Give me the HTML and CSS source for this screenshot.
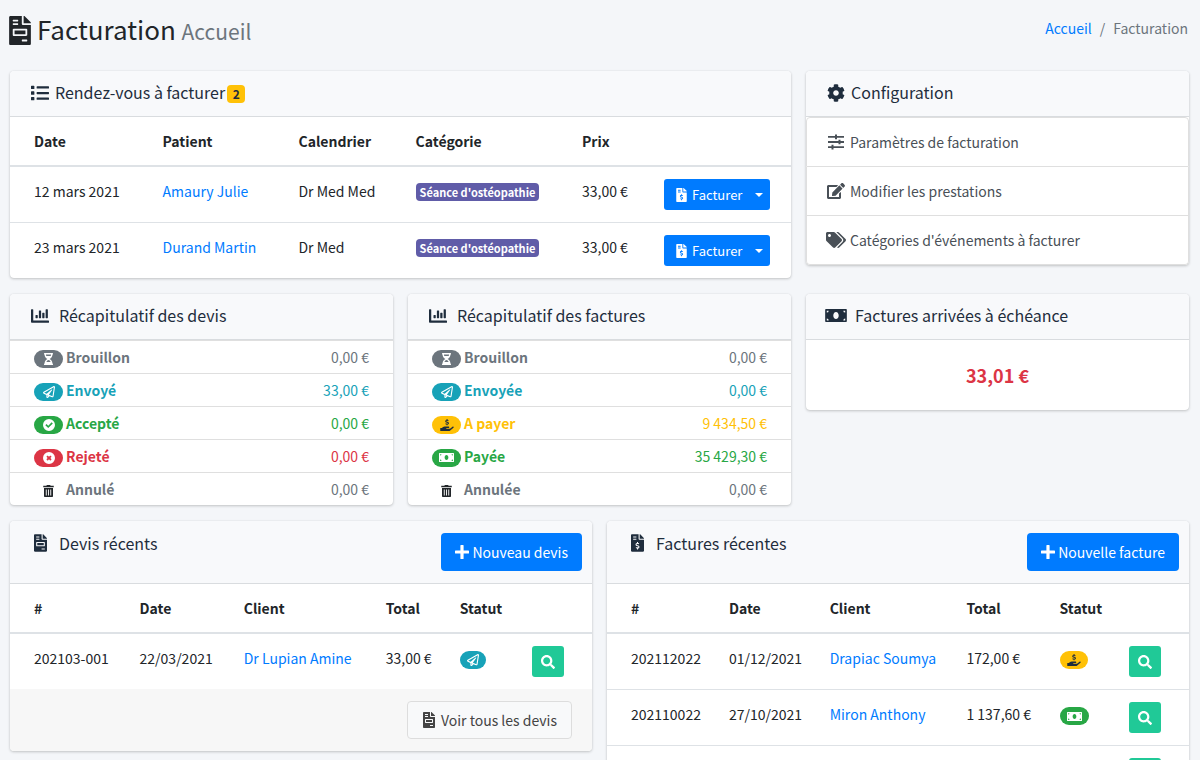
FILE: index.html
```html
<!DOCTYPE html>
<html lang="fr">
<head>
<meta charset="utf-8">
<meta name="viewport" content="width=device-width, initial-scale=1">
<title>Facturation</title>
<link rel="stylesheet" href="styles.css">
</head>
<body>
<svg class="sprite" aria-hidden="true">
  <symbol id="invoice" viewBox="0 0 384 512"><path d="M288 256H96v64h192v-64zm89-151L279.1 7c-4.5-4.5-10.6-7-17-7H256v128h128v-6.1c0-6.3-2.5-12.4-7-16.9zm-153 31V0H24C10.7 0 0 10.7 0 24v464c0 13.3 10.7 24 24 24h336c13.3 0 24-10.7 24-24V160H248c-13.2 0-24-10.8-24-24zM64 72c0-4.42 3.58-8 8-8h80c4.42 0 8 3.58 8 8v16c0 4.42-3.58 8-8 8H72c-4.42 0-8-3.58-8-8V72zm0 64c0-4.42 3.58-8 8-8h80c4.42 0 8 3.58 8 8v16c0 4.42-3.58 8-8 8H72c-4.42 0-8-3.58-8-8v-16zm256 304c0 4.42-3.58 8-8 8h-80c-4.42 0-8-3.58-8-8v-16c0-4.42 3.58-8 8-8h80c4.42 0 8 3.58 8 8v16zm0-200v96c0 8.84-7.16 16-16 16H80c-8.84 0-16-7.16-16-16v-96c0-8.84 7.16-16 16-16h224c8.84 0 16 7.16 16 16z"/></symbol>
  <symbol id="invoice-dollar" viewBox="0 0 384 512"><path d="M377 105L279.1 7c-4.5-4.5-10.6-7-17-7H256v128h128v-6.1c0-6.3-2.5-12.4-7-16.9zm-153 31V0H24C10.7 0 0 10.7 0 24v464c0 13.3 10.7 24 24 24h336c13.3 0 24-10.7 24-24V160H248c-13.2 0-24-10.8-24-24zM64 72c0-4.42 3.58-8 8-8h80c4.42 0 8 3.58 8 8v16c0 4.42-3.58 8-8 8H72c-4.42 0-8-3.58-8-8V72zm0 80v-16c0-4.42 3.58-8 8-8h80c4.42 0 8 3.58 8 8v16c0 4.42-3.58 8-8 8H72c-4.42 0-8-3.58-8-8zm144 263.88V440c0 4.42-3.58 8-8 8h-16c-4.42 0-8-3.58-8-8v-24.29c-11.29-.58-22.27-4.52-31.37-11.35-3.9-2.93-4.1-8.77-.57-12.14l11.75-11.21c2.77-2.64 6.89-2.76 10.13-.73 3.87 2.42 8.26 3.72 12.82 3.72h28.11c6.5 0 11.8-5.92 11.8-13.19 0-5.95-3.61-11.19-8.77-12.73l-45-13.5c-18.59-5.58-31.58-23.42-31.58-43.39 0-24.52 19.05-44.44 42.67-45.07V232c0-4.42 3.58-8 8-8h16c4.42 0 8 3.58 8 8v24.29c11.29.58 22.27 4.51 31.37 11.35 3.9 2.93 4.1 8.77.57 12.14l-11.75 11.21c-2.77 2.64-6.89 2.76-10.13.73-3.87-2.43-8.26-3.72-12.82-3.72h-28.11c-6.5 0-11.8 5.92-11.8 13.19 0 5.95 3.61 11.19 8.77 12.73l45 13.5c18.59 5.58 31.58 23.42 31.58 43.39 0 24.53-19.05 44.44-42.67 45.07z"/></symbol>
  <symbol id="list" viewBox="0 0 512 512"><path d="M80 368H16a16 16 0 0 0-16 16v64a16 16 0 0 0 16 16h64a16 16 0 0 0 16-16v-64a16 16 0 0 0-16-16zm0-320H16A16 16 0 0 0 0 64v64a16 16 0 0 0 16 16h64a16 16 0 0 0 16-16V64a16 16 0 0 0-16-16zm0 160H16a16 16 0 0 0-16 16v64a16 16 0 0 0 16 16h64a16 16 0 0 0 16-16v-64a16 16 0 0 0-16-16zm416 176H176a16 16 0 0 0-16 16v32a16 16 0 0 0 16 16h320a16 16 0 0 0 16-16v-32a16 16 0 0 0-16-16zm0-320H176a16 16 0 0 0-16 16v32a16 16 0 0 0 16 16h320a16 16 0 0 0 16-16V80a16 16 0 0 0-16-16zm0 160H176a16 16 0 0 0-16 16v32a16 16 0 0 0 16 16h320a16 16 0 0 0 16-16v-32a16 16 0 0 0-16-16z"/></symbol>
  <symbol id="cog" viewBox="0 0 512 512"><path d="M487.4 315.7l-42.6-24.6c4.3-23.2 4.3-47 0-70.2l42.6-24.6c4.9-2.8 7.1-8.6 5.5-14-11.1-35.6-30-67.8-54.7-94.6-3.8-4.1-10-5.1-14.8-2.3L380.8 110c-17.9-15.4-38.5-27.3-60.8-35.1V25.8c0-5.6-3.9-10.5-9.4-11.7-36.7-8.2-74.3-7.8-109.2 0-5.5 1.2-9.4 6.1-9.4 11.7V75c-22.2 7.9-42.8 19.8-60.8 35.1L88.7 85.5c-4.9-2.8-11-1.9-14.8 2.3-24.7 26.7-43.6 58.9-54.7 94.6-1.7 5.4.6 11.2 5.5 14L67.3 221c-4.3 23.2-4.3 47 0 70.2l-42.6 24.6c-4.9 2.8-7.1 8.6-5.5 14 11.1 35.6 30 67.8 54.7 94.6 3.8 4.1 10 5.1 14.8 2.3l42.6-24.6c17.9 15.4 38.5 27.3 60.8 35.1v49.2c0 5.6 3.9 10.5 9.4 11.7 36.7 8.2 74.3 7.8 109.2 0 5.5-1.2 9.4-6.1 9.4-11.7v-49.2c22.2-7.9 42.8-19.8 60.8-35.1l42.6 24.6c4.9 2.8 11 1.9 14.8-2.3 24.7-26.7 43.6-58.9 54.7-94.6 1.5-5.5-.7-11.3-5.6-14.1zM256 336c-44.1 0-80-35.9-80-80s35.9-80 80-80 80 35.9 80 80-35.9 80-80 80z"/></symbol>
  <symbol id="sliders" viewBox="0 0 16 16"><path d="M0 2h7V.6h2V2h7v1.800H9v1.400H7V3.800H0zM0 7.100h10.500V5.700h2v1.400H16v1.800h-3.500v1.400h-2V8.900H0zM0 12.200h3.500v-1.400h2v1.400H16V14H5.500v1.400h-2V14H0z"/></symbol>
  <symbol id="edit" viewBox="0 0 576 512"><path d="M402.6 83.2l90.2 90.2c3.8 3.8 3.8 10 0 13.8L274.4 405.6l-92.8 10.3c-12.4 1.4-22.9-9.1-21.5-21.5l10.3-92.8L388.8 83.2c3.8-3.8 10-3.8 13.8 0zm162-22.9l-48.800-48.800c-15.200-15.200-39.900-15.200-55.200 0l-35.400 35.400c-3.800 3.800-3.800 10 0 13.800l90.200 90.200c3.800 3.800 10 3.800 13.800 0l35.400-35.400c15.200-15.300 15.200-40 0-55.200zM384 346.200V448H64V128h229.800c3.200 0 6.200-1.300 8.500-3.500l40-40c7.600-7.600 2.200-20.500-8.500-20.500H48C21.500 64 0 85.500 0 112v352c0 26.500 21.500 48 48 48h352c26.500 0 48-21.500 48-48V306.200c0-10.700-12.900-16-20.500-8.500l-40 40c-2.200 2.300-3.500 5.300-3.500 8.500z"/></symbol>
  <symbol id="tags" viewBox="0 0 640 512"><path d="M497.941 225.941L286.059 14.059A48 48 0 0 0 252.118 0H48C21.490 0 0 21.490 0 48v204.118a48 48 0 0 0 14.059 33.941l211.882 211.882c18.744 18.745 49.136 18.746 67.882 0l204.118-204.118c18.745-18.745 18.745-49.137 0-67.882zM112 160c-26.510 0-48-21.490-48-48s21.490-48 48-48 48 21.490 48 48-21.490 48-48 48zm513.941 133.823L421.823 497.941c-18.745 18.745-49.137 18.745-67.882 0l-.36-.36L527.640 323.522c16.999-16.999 26.362-39.600 26.362-63.640s-9.362-46.641-26.362-63.640L331.397 0h48.721a48 48 0 0 1 33.941 14.059l211.882 211.882c18.745 18.745 18.745 49.137 0 67.882z"/></symbol>
  <symbol id="chart" viewBox="0 0 512 512"><path d="M332.8 320h38.4c6.400 0 12.800-6.400 12.800-12.800V172.800c0-6.400-6.400-12.800-12.800-12.800h-38.400c-6.400 0-12.800 6.400-12.800 12.800v134.400c0 6.400 6.400 12.800 12.800 12.800zm96 0h38.400c6.400 0 12.800-6.400 12.800-12.800V76.800c0-6.400-6.400-12.800-12.800-12.800h-38.400c-6.400 0-12.800 6.400-12.800 12.800v230.400c0 6.400 6.400 12.800 12.800 12.800zm-288 0h38.400c6.400 0 12.800-6.400 12.800-12.800v-70.400c0-6.400-6.400-12.800-12.800-12.800h-38.400c-6.400 0-12.800 6.400-12.800 12.800v70.400c0 6.400 6.400 12.800 12.800 12.800zm96 0h38.400c6.400 0 12.800-6.400 12.800-12.800V108.800c0-6.400-6.400-12.800-12.800-12.800h-38.400c-6.400 0-12.800 6.400-12.800 12.800v198.400c0 6.400 6.400 12.800 12.800 12.800zM496 384H64V80c0-8.840-7.160-16-16-16H16C7.160 64 0 71.160 0 80v336c0 17.670 14.330 32 32 32h464c8.840 0 16-7.160 16-16v-32c0-8.840-7.160-16-16-16z"/></symbol>
  <symbol id="money" viewBox="0 0 640 384"><path fill-rule="evenodd" d="M24 0h592a24 24 0 0 1 24 24v336a24 24 0 0 1-24 24H24a24 24 0 0 1-24-24V24A24 24 0 0 1 24 0zM48 48v56a56 56 0 0 0 56-56zM592 48h-56a56 56 0 0 0 56 56zM48 336h56a56 56 0 0 0-56-56zM592 336v-56a56 56 0 0 0-56 56zM320 88c-46 0-80 46-80 104s34 104 80 104 80-46 80-104-34-104-80-104z"/></symbol>
  <symbol id="hourglass" viewBox="0 0 384 512"><path fill-rule="evenodd" d="M24 0h336a24 24 0 0 1 24 24v16a24 24 0 0 1-24 24c0 91-51 168-121 192 70 24 121 101 121 192a24 24 0 0 1 24 24v16a24 24 0 0 1-24 24H24a24 24 0 0 1-24-24v-16a24 24 0 0 1 24-24c0-91 51-168 121-192C75 232 24 155 24 64A24 24 0 0 1 0 40V24A24 24 0 0 1 24 0zM84 64c2 20 6 40 14 62h188c8-22 12-42 14-62zM102 384h180c-20-50-54-82-90-82s-70 32-90 82z"/></symbol>
  <symbol id="plane" viewBox="0 0 512 512"><path d="M440 6.500L24 246.400c-34.400 19.900-31.100 70.800 5.700 85.900L144 379.600V464c0 46.400 59.200 65.500 86.600 28.600l43.800-59.100 111.900 46.200c5.900 2.400 12.100 3.600 18.300 3.600 8.200 0 16.300-2.100 23.600-6.200 12.800-7.200 21.600-20 23.900-34.500l59.400-387.200c6.100-40.100-36.900-68.800-71.500-48.900zM192 464v-64.600l36.600 15.100L192 464zm212.600-28.700l-153.800-63.500L391 169.500c10.700-15.500-9.500-33.500-23.700-21.200L155.800 332.600 48 288 464 48l-59.400 387.300z"/></symbol>
  <symbol id="check" viewBox="0 0 16 16"><path fill-rule="evenodd" d="M8 0a8 8 0 1 1 0 16A8 8 0 0 1 8 0zM7 12.100l6.100-6.100-1.600-1.600L7 8.900 4.700 6.600 3.100 8.200z"/></symbol>
  <symbol id="times" viewBox="0 0 16 16"><path fill-rule="evenodd" d="M8 0a8 8 0 1 1 0 16A8 8 0 0 1 8 0zM4.500 6.300L6.200 8 4.500 9.700l1.800 1.800L8 9.800l1.700 1.700 1.800-1.800L9.800 8l1.700-1.700-1.800-1.800L8 6.200 6.300 4.500z"/></symbol>
  <symbol id="hand" viewBox="0 0 576 512"><path d="M565.300 328.100c-11.800-10.700-30.200-10-42.600 0L430.300 402c-11.300 9.100-25.400 14-40 14H272c-8.800 0-16-7.200-16-16s7.200-16 16-16h78.300c15.900 0 30.700-10.900 33.300-26.600 3.300-20-12.100-37.400-31.600-37.400H192c-27 0-53.100 9.300-74.100 26.300L71.400 384H16c-8.800 0-16 7.200-16 16v96c0 8.800 7.200 16 16 16h356.800c14.500 0 28.600-4.900 40-14L564 377c15.200-12.100 16.400-35.300 1.300-48.900z"/><path fill="none" stroke="currentColor" stroke-width="44" d="M350 80c-16-14-36-20-60-20-36 0-60 14-60 38 0 56 122 30 122 86 0 26-28 38-62 38-26 0-48-8-64-22M290 4v52M290 222v44"/></symbol>
  <symbol id="trash" viewBox="0 0 14 16"><path fill-rule="evenodd" d="M4.500 1V0h5v1H14v2H0V1zM1 4h12v11a1 1 0 0 1-1 1H2a1 1 0 0 1-1-1zM3.400 6v8h1.200V6zM6.400 6v8h1.200V6zM9.400 6v8h1.200V6z"/></symbol>
  <symbol id="plus" viewBox="0 0 14 14"><path d="M6 0h2q.6 0 .6.600v4.800h4.800q.6 0 .6.600v2q0 .6-.6.600H8.600v4.800q0 .6-.6.600H6q-.6 0-.6-.6V8.600H.6Q0 8.600 0 8V6q0-.6.600-.6h4.800V.6Q5.400 0 6 0z"/></symbol>
  <symbol id="search" viewBox="0 0 512 512"><path d="M505 442.700L405.300 343c-4.500-4.500-10.600-7-17-7H372c27.600-35.300 44-79.700 44-128C416 93.100 322.900 0 208 0S0 93.100 0 208s93.100 208 208 208c48.300 0 92.700-16.400 128-44v16.300c0 6.400 2.500 12.500 7 17l99.700 99.700c9.400 9.400 24.600 9.400 33.900 0l28.300-28.300c9.400-9.400 9.400-24.600.1-34zM208 336c-70.700 0-128-57.200-128-128 0-70.700 57.200-128 128-128 70.700 0 128 57.200 128 128 0 70.700-57.200 128-128 128z"/></symbol>
</svg>

<header class="page-header">
  <h1 class="page-title"><svg class="i-page"><use href="#invoice"/></svg><span>Facturation <small>Accueil</small></span></h1>
  <nav class="breadcrumb" aria-label="Fil d'Ariane"><a href="#">Accueil</a><span>/</span><span>Facturation</span></nav>
</header>

<main class="content">
  <div class="thirds">
    <section class="card wide">
      <div class="card-header"><h2 class="card-title tight"><span class="slot"><svg class="i-18"><use href="#list"/></svg></span><span>Rendez-vous à facturer</span><span class="count">2</span></h2></div>
      <table class="table t-appointments">
        <colgroup><col class="c1"><col class="c2"><col class="c3"><col class="c4"><col class="c5"><col></colgroup>
        <thead><tr><th>Date</th><th>Patient</th><th>Calendrier</th><th>Catégorie</th><th>Prix</th><td></td></tr></thead>
        <tbody>
          <tr><td>12 mars 2021</td><td><a href="#">Amaury Julie</a></td><td>Dr Med Med</td><td><span class="tag">Séance d'ostéopathie</span></td><td>33,00 €</td><td><div class="split"><button class="btn-sm" type="button"><svg class="i-doc-sm"><use href="#invoice-dollar"/></svg>Facturer</button><button class="btn-caret" type="button" aria-label="Plus d'options"></button></div></td></tr>
          <tr><td>23 mars 2021</td><td><a href="#">Durand Martin</a></td><td>Dr Med</td><td><span class="tag">Séance d'ostéopathie</span></td><td>33,00 €</td><td><div class="split"><button class="btn-sm" type="button"><svg class="i-doc-sm"><use href="#invoice-dollar"/></svg>Facturer</button><button class="btn-caret" type="button" aria-label="Plus d'options"></button></div></td></tr>
        </tbody>
      </table>
    </section>

    <section class="card">
      <div class="card-header"><h2 class="card-title tight"><span class="slot"><svg class="i-18"><use href="#cog"/></svg></span>Configuration</h2></div>
      <nav class="menu">
        <a href="#"><span class="slot"><svg class="i-16"><use href="#sliders"/></svg></span>Paramètres de facturation</a>
        <a href="#"><span class="slot"><svg class="i-18x16"><use href="#edit"/></svg></span>Modifier les prestations</a>
        <a href="#"><span class="slot"><svg class="i-20x16"><use href="#tags"/></svg></span>Catégories d'événements à facturer</a>
      </nav>
    </section>
  </div>

  <div class="thirds">
    <section class="card">
      <div class="card-header"><h2 class="card-title"><span class="slot"><svg class="i-18"><use href="#chart"/></svg></span>Récapitulatif des devis</h2></div>
      <ul class="summary">
        <li class="gray"><span class="pill bg-gray"><svg class="i-9x12"><use href="#hourglass"/></svg></span><b>Brouillon</b><span class="amount">0,00 €</span></li>
        <li class="teal"><span class="pill bg-teal"><svg class="i-12"><use href="#plane"/></svg></span><b>Envoyé</b><span class="amount">33,00 €</span></li>
        <li class="green"><span class="pill bg-green"><svg class="i-12"><use href="#check"/></svg></span><b>Accepté</b><span class="amount">0,00 €</span></li>
        <li class="red"><span class="pill bg-red"><svg class="i-12"><use href="#times"/></svg></span><b>Rejeté</b><span class="amount">0,00 €</span></li>
        <li class="gray"><span class="pill bg-none"><svg class="i-11x12"><use href="#trash"/></svg></span><b>Annulé</b><span class="amount">0,00 €</span></li>
      </ul>
    </section>

    <section class="card">
      <div class="card-header"><h2 class="card-title"><span class="slot"><svg class="i-18"><use href="#chart"/></svg></span>Récapitulatif des factures</h2></div>
      <ul class="summary">
        <li class="gray"><span class="pill bg-gray"><svg class="i-9x12"><use href="#hourglass"/></svg></span><b>Brouillon</b><span class="amount">0,00 €</span></li>
        <li class="teal"><span class="pill bg-teal"><svg class="i-12"><use href="#plane"/></svg></span><b>Envoyée</b><span class="amount">0,00 €</span></li>
        <li class="yellow"><span class="pill bg-yellow"><svg class="i-14x12"><use href="#hand"/></svg></span><b>A payer</b><span class="amount">9 434,50 €</span></li>
        <li class="green"><span class="pill bg-green"><svg class="i-15x9"><use href="#money"/></svg></span><b>Payée</b><span class="amount">35 429,30 €</span></li>
        <li class="gray"><span class="pill bg-none"><svg class="i-11x12"><use href="#trash"/></svg></span><b>Annulée</b><span class="amount">0,00 €</span></li>
      </ul>
    </section>

    <section class="card">
      <div class="card-header"><h2 class="card-title"><span class="slot"><svg class="i-22x13"><use href="#money"/></svg></span>Factures arrivées à échéance</h2></div>
      <p class="due">33,01 €</p>
    </section>
  </div>

  <div class="halves">
    <section class="card">
      <div class="card-header with-action"><h2 class="card-title"><span class="slot"><svg class="i-doc"><use href="#invoice"/></svg></span>Devis récents</h2><button class="btn primary" type="button"><svg class="i-14"><use href="#plus"/></svg>Nouveau devis</button></div>
      <table class="table t-quotes">
        <colgroup><col class="c1"><col class="c2"><col class="c3"><col class="c4"><col class="c5"><col></colgroup>
        <thead><tr><th>#</th><th>Date</th><th>Client</th><th>Total</th><th>Statut</th><td></td></tr></thead>
        <tbody>
          <tr><td>202103-001</td><td>22/03/2021</td><td><a href="#">Dr Lupian Amine</a></td><td>33,00 €</td><td><span class="status bg-teal"><svg class="i-12"><use href="#plane"/></svg></span></td><td><button class="btn-view" type="button" aria-label="Voir"><svg class="i-14"><use href="#search"/></svg></button></td></tr>
        </tbody>
      </table>
      <div class="card-footer"><button class="btn light" type="button"><svg class="i-doc-md"><use href="#invoice"/></svg>Voir tous les devis</button></div>
    </section>

    <section class="card">
      <div class="card-header with-action"><h2 class="card-title"><span class="slot"><svg class="i-doc"><use href="#invoice-dollar"/></svg></span>Factures récentes</h2><button class="btn primary" type="button"><svg class="i-14"><use href="#plus"/></svg>Nouvelle facture</button></div>
      <table class="table t-invoices">
        <colgroup><col class="c1"><col class="c2"><col class="c3"><col class="c4"><col class="c5"><col></colgroup>
        <thead><tr><th>#</th><th>Date</th><th>Client</th><th>Total</th><th>Statut</th><td></td></tr></thead>
        <tbody>
          <tr><td>202112022</td><td>01/12/2021</td><td><a href="#">Drapiac Soumya</a></td><td>172,00 €</td><td><span class="status bg-yellow"><svg class="i-14x12"><use href="#hand"/></svg></span></td><td><button class="btn-view" type="button" aria-label="Voir"><svg class="i-14"><use href="#search"/></svg></button></td></tr>
          <tr><td>202110022</td><td>27/10/2021</td><td><a href="#">Miron Anthony</a></td><td>1 137,60 €</td><td><span class="status bg-green"><svg class="i-15x9"><use href="#money"/></svg></span></td><td><button class="btn-view" type="button" aria-label="Voir"><svg class="i-14"><use href="#search"/></svg></button></td></tr>
          <tr><td></td><td></td><td></td><td></td><td></td><td><button class="btn-view" type="button" aria-label="Voir"><svg class="i-14"><use href="#search"/></svg></button></td></tr>
        </tbody>
      </table>
    </section>
  </div>
</main>
</body>
</html>
```
FILE: styles.css
```css
* { box-sizing: border-box; }

body {
  margin: 0;
  background: #f4f6f9;
  color: #212529;
  font: 14px/24px "Noto Sans CJK SC", "Noto Sans", sans-serif;
}

button { font: inherit; cursor: pointer; }
a { color: #007bff; text-decoration: none; }
h1, h2, p, ul { margin: 0; padding: 0; font-weight: 400; }
svg { display: block; flex: none; fill: currentColor; }
.sprite { position: absolute; width: 0; height: 0; }

.i-page { width: 22px; height: 29px; }
.i-18 { width: 18px; height: 18px; }
.i-16 { width: 16px; height: 16px; }
.i-18x16 { width: 18px; height: 16px; }
.i-20x16 { width: 20px; height: 16px; }
.i-22x13 { width: 22px; height: 13px; }
.i-doc { width: 13px; height: 18px; }
.i-doc-md { width: 12px; height: 16px; }
.i-doc-sm { width: 11px; height: 14px; }
.i-14 { width: 14px; height: 14px; }
.i-12 { width: 12px; height: 12px; }
.i-9x12 { width: 9px; height: 12px; }
.i-11x12 { width: 11px; height: 12px; }
.i-14x12 { width: 14px; height: 12px; }
.i-15x9 { width: 15px; height: 9px; }

.page-header {
  display: flex;
  justify-content: space-between;
  align-items: flex-start;
  padding: 13px 12px 24px 9px;
}
.page-title {
  display: flex;
  align-items: center;
  gap: 6px;
  font-size: 26px;
  line-height: 32px;
}
.page-title small { font-size: 21px; color: #6c757d; }
.breadcrumb { display: flex; gap: 8px; padding-top: 3px; color: #6c757d; }

.content { display: grid; gap: 16px; padding: 0 11px 16px 10px; }
.thirds, .halves { display: grid; gap: 15px; align-items: start; }
.thirds { grid-template-columns: repeat(3, minmax(0, 1fr)); }
.halves { grid-template-columns: repeat(2, minmax(0, 1fr)); }
.wide { grid-column: span 2; }

.card {
  overflow: hidden;
  border-radius: 4px;
  background: #fff;
  box-shadow: 0 0 1px rgba(0, 0, 0, .125), 0 1px 3px rgba(0, 0, 0, .2);
}
.card-header {
  display: flex;
  justify-content: space-between;
  align-items: flex-start;
  padding: 10px 20px 12px;
  border-bottom: 1px solid #d9dcdf;
  background: #f8f9fb;
  color: #1f2d3d;
}
.with-action { padding: 12px 10px 12px 20px; }
.card-title {
  display: flex;
  align-items: center;
  gap: 9px;
  font-size: 16px;
  line-height: 23px;
}
.with-action .card-title { line-height: 20px; }
.tight { gap: 5px; }
.slot { display: flex; justify-content: center; flex: none; width: 20px; }
.count {
  width: 18px;
  margin: 3px 0 0 -3px;
  border-radius: 4px;
  background: #ffc107;
  color: #1f2d3d;
  font-size: 12px;
  font-weight: 700;
  line-height: 18px;
  text-align: center;
}
.card-footer {
  display: flex;
  justify-content: flex-end;
  padding: 12px 20px;
  background: #f7f7f7;
}

.table { width: 100%; table-layout: fixed; border-collapse: separate; border-spacing: 0; }
.table th, .table td { padding: 12px; text-align: left; vertical-align: top; white-space: nowrap; }
.table th:first-child, .table td:first-child { padding-left: 24px; }
.table thead th, .table thead td { border-bottom: 2px solid #dee2e6; }
.table tbody tr + tr td { border-top: 1px solid #dee2e6; }

.t-appointments .c1 { width: 18%; }
.t-appointments .c2 { width: 17.4%; }
.t-appointments .c3 { width: 15%; }
.t-appointments .c4 { width: 21.3%; }
.t-appointments .c5 { width: 10.5%; }
.t-quotes .c1 { width: 20.2%; }
.t-quotes .c2 { width: 17.9%; }
.t-quotes .c3 { width: 24.4%; }
.t-quotes .c4 { width: 12.7%; }
.t-quotes .c5 { width: 12.4%; }
.t-invoices .c1 { width: 18.9%; }
.t-invoices .c2 { width: 17.3%; }
.t-invoices .c3 { width: 23.5%; }
.t-invoices .c4 { width: 16%; }
.t-invoices .c5 { width: 12%; }

.tag {
  display: inline-block;
  padding: 0 4px;
  border-radius: 4px;
  background: #605ca8;
  color: #fff;
  font-size: 11px;
  font-weight: 700;
  line-height: 18px;
}
.split { display: flex; }
.btn-sm, .btn-caret {
  display: flex;
  align-items: center;
  height: 31px;
  border: 0;
  background: #007bff;
  color: #fff;
}
.btn-sm { gap: 5px; padding: 0 6px 0 12px; border-radius: 3px 0 0 3px; font-size: 13px; }
.btn-caret { padding: 0 7px; border-radius: 0 3px 3px 0; }
.btn-caret::before { content: ""; border: 4px solid transparent; border-top-color: #fff; border-bottom: 0; }

.menu a {
  display: flex;
  align-items: center;
  gap: 4px;
  padding: 12px 19px;
  border: 1px solid #dfdfdf;
  border-top-width: 0;
  color: #495057;
}
.menu a:first-child { border-top-width: 1px; border-radius: 4px 4px 0 0; }
.menu a:last-child { border-radius: 0 0 4px 4px; }

.summary { list-style: none; }
.summary li {
  display: flex;
  align-items: center;
  gap: 3px;
  height: 33px;
  padding: 0 24px;
  border-top: 1px solid #dfdfdf;
}
.amount { margin-left: auto; }
.gray { color: #6c757d; }
.teal { color: #17a2b8; }
.green { color: #28a745; }
.red { color: #dc3545; }
.yellow { color: #ffc107; }

.pill, .status {
  display: flex;
  justify-content: center;
  align-items: center;
  height: 18px;
  border-radius: 9px;
  color: #fff;
}
.pill { width: 29px; margin-top: 3px; }
.status { width: max-content; margin-top: 5px; padding: 0 7px; }
.bg-gray { background: #6c757d; }
.bg-teal { background: #17a2b8; }
.bg-green { background: #28a745; }
.bg-red { background: #dc3545; }
.bg-yellow { background: #ffc107; color: #1f2d3d; }
.bg-none { color: #212529; }

.due { padding: 23px 20px; color: #dc3545; font-size: 18px; font-weight: 700; text-align: center; }

.btn {
  display: flex;
  align-items: center;
  height: 38px;
  border-radius: 4px;
  font-size: 14px;
}
.primary { gap: 3px; padding: 0 14px; border: 0; background: #007bff; color: #fff; }
.light { gap: 6px; padding: 0 14px 0 15px; border: 1px solid #ddd; background: #f8f9fa; color: #444; }
.btn-view {
  display: grid;
  place-items: center;
  width: 32px;
  height: 31px;
  padding: 0;
  border: 0;
  border-radius: 3px;
  background: #20c997;
  color: #fff;
}
```
